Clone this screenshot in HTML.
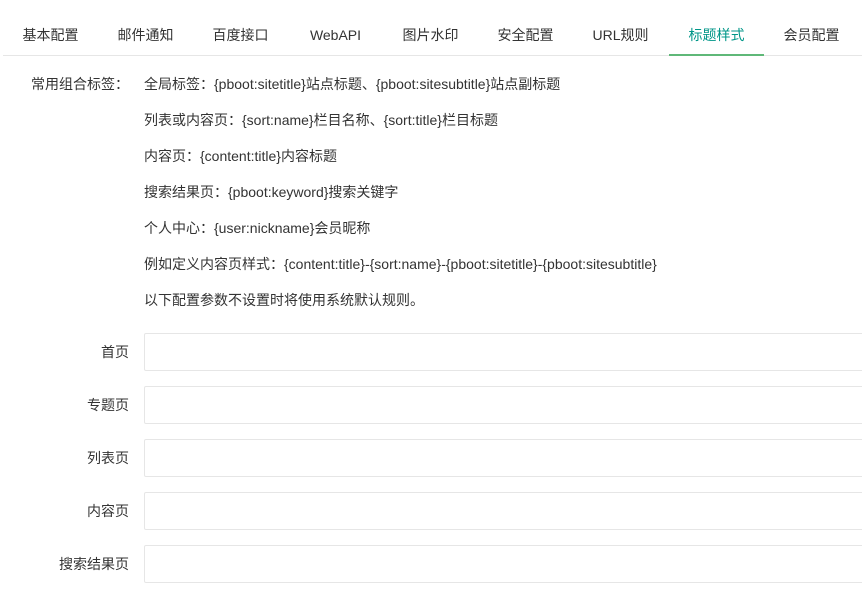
<!DOCTYPE html>
<html><head><meta charset="utf-8"><style>
body{margin:0;background:#fff;font-family:"Liberation Sans","Noto Sans CJK SC",sans-serif;color:#333;width:862px;height:596px;overflow:hidden;position:relative}
.tabs{position:absolute;left:3px;top:0;height:55px;width:870px;border-bottom:1px solid #e6e6e6}
.tab{position:absolute;top:0;width:95px;height:55px;line-height:70px;text-align:center;font-size:14px;color:#333}
.tab.on{color:#009688;border-bottom:2px solid #5FB878;height:54px;top:0}
.t{position:absolute;font-size:14px;line-height:16px;white-space:nowrap}
.lab{position:absolute;right:733px;font-size:14px;line-height:16px;text-align:right;white-space:nowrap}
.inp{position:absolute;left:144px;width:730px;height:36px;border:1px solid #e6e6e6;border-radius:2px}
</style></head><body>
<div class="tabs">
<div class="tab" style="left:0">基本配置</div>
<div class="tab" style="left:95px">邮件通知</div>
<div class="tab" style="left:190px">百度接口</div>
<div class="tab" style="left:285px">WebAPI</div>
<div class="tab" style="left:380px">图片水印</div>
<div class="tab" style="left:475px">安全配置</div>
<div class="tab" style="left:570px">URL规则</div>
<div class="tab on" style="left:666px">标题样式</div>
<div class="tab" style="left:761px">会员配置</div>
</div>
<div class="t" style="left:31px;top:76px">常用组合标签：</div>
<div class="t" style="left:144px;top:76px">全局标签：{pboot:sitetitle}站点标题、{pboot:sitesubtitle}站点副标题</div>
<div class="t" style="left:144px;top:112px">列表或内容页：{sort:name}栏目名称、{sort:title}栏目标题</div>
<div class="t" style="left:144px;top:148px">内容页：{content:title}内容标题</div>
<div class="t" style="left:144px;top:184px">搜索结果页：{pboot:keyword}搜索关键字</div>
<div class="t" style="left:144px;top:220px">个人中心：{user:nickname}会员昵称</div>
<div class="t" style="left:144px;top:256px">例如定义内容页样式：{content:title}-{sort:name}-{pboot:sitetitle}-{pboot:sitesubtitle}</div>
<div class="t" style="left:144px;top:292px">以下配置参数不设置时将使用系统默认规则。</div>
<div class="lab" style="top:344px">首页</div><div class="inp" style="top:333px"></div>
<div class="lab" style="top:397px">专题页</div><div class="inp" style="top:386px"></div>
<div class="lab" style="top:450px">列表页</div><div class="inp" style="top:439px"></div>
<div class="lab" style="top:503px">内容页</div><div class="inp" style="top:492px"></div>
<div class="lab" style="top:556px">搜索结果页</div><div class="inp" style="top:545px"></div>
</body></html>
